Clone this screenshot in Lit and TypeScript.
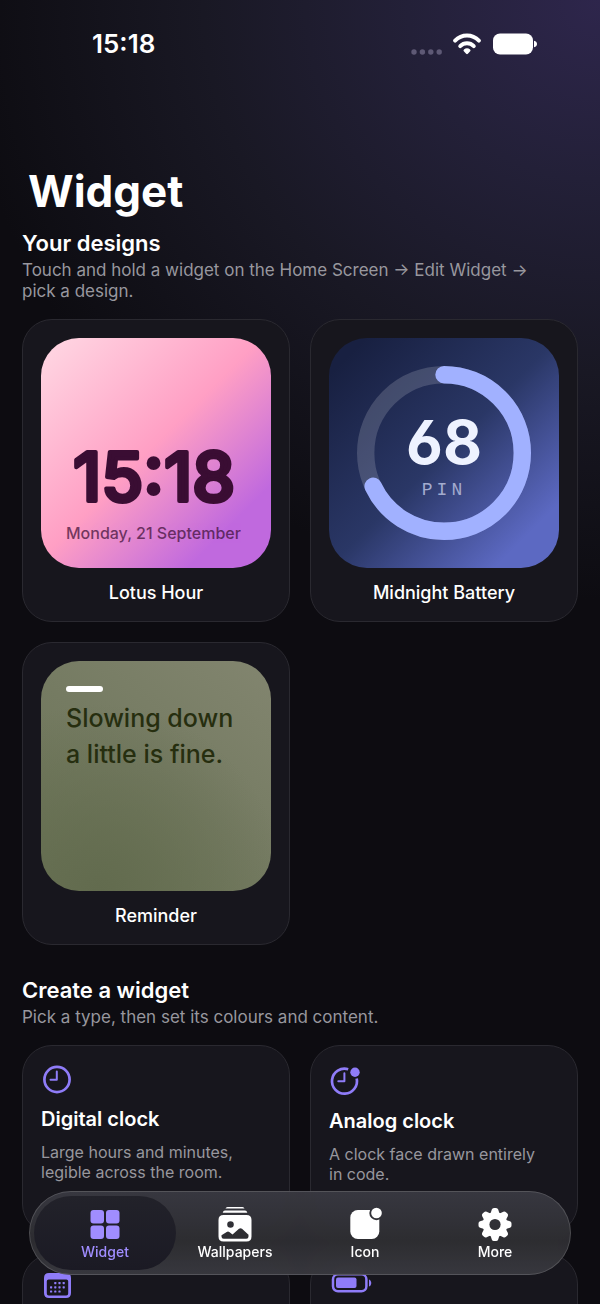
import { LitElement, html, svg, css } from "lit";
import { customElement, property, state } from "lit/decorators.js";

const palette = css`
  :host {
    --ink: #ffffff;
    --muted: #98979e;
    --accent: #8f7cf8;
    --card: #17161d;
    --line: #2a2930;
    font-family: Inter, "Liberation Sans", sans-serif;
    color: var(--ink);
  }
  * {
    box-sizing: border-box;
  }
  button {
    font: inherit;
    color: inherit;
    cursor: pointer;
  }
  svg {
    display: block;
  }
`;

@customElement("status-bar")
export class StatusBar extends LitElement {
  static styles = [
    palette,
    css`
      :host {
        display: flex;
        align-items: center;
        justify-content: space-between;
        height: 88px;
        padding: 0 63px 0 92px;
      }
      .time {
        font-size: 26px;
        line-height: 28px;
        font-weight: 600;
      }
      .signals {
        display: flex;
        align-items: center;
        gap: 11px;
      }
      .dots {
        margin-top: 16px;
      }
    `,
  ];

  render() {
    return html`
      <time class="time">15:18</time>
      <div class="signals">
        <svg class="dots" width="31" height="6" viewBox="0 0 31 6" fill="#5e5975" aria-label="No signal">
          <circle cx="3" cy="3" r="2.7" />
          <circle cx="11.4" cy="3" r="2.7" />
          <circle cx="19.8" cy="3" r="2.7" />
          <circle cx="28.2" cy="3" r="2.7" />
        </svg>
        <svg width="28" height="22" viewBox="0 0 28 22" fill="none" stroke="#fff" stroke-width="3.9" stroke-linecap="round" aria-label="Wi-Fi">
          <path d="M2.1 7.6C8.7.8 19.3.8 25.9 7.6" />
          <path d="M7.2 13.1C11 9.3 17 9.3 20.8 13.1" />
          <path d="M14 19.9 11.7 17.5Q14 15.6 16.3 17.5Z" fill="#fff" stroke-width="2.4" stroke-linejoin="round" />
        </svg>
        <svg width="45" height="22" viewBox="0 0 45 22" fill="#fff" aria-label="Battery full">
          <rect x="1" y="0.5" width="40" height="21" rx="7" />
          <path d="M42 7.8C44.2 8.4 45 9.600 45 11S44.200 13.600 42 14.200Z" />
        </svg>
      </div>
    `;
  }
}

@customElement("design-card")
export class DesignCard extends LitElement {
  @property() kind = "clock";
  @property() label = "";

  static styles = [
    palette,
    css`
      .card {
        display: flex;
        flex-direction: column;
        gap: 14px;
        width: 100%;
        padding: 18px 18px 17px;
        border: 1px solid var(--line);
        border-radius: 30px;
        background: var(--card);
      }
      .preview {
        display: flex;
        flex-direction: column;
        width: 100%;
        aspect-ratio: 1;
        border-radius: 38px;
        overflow: hidden;
        text-align: left;
      }
      .clock {
        justify-content: flex-end;
        gap: 20px;
        padding: 25px;
        background: linear-gradient(135deg, #ffd9e4 0%, #ff9fc4 48%, #c069de 82%, #c069de 100%);
        color: #3a0d33;
      }
      .digits {
        width: 100%;
        overflow: visible;
        font-size: 68px;
        font-weight: 500;
        fill: #3a0d33;
        stroke: #3a0d33;
        stroke-width: 4px;
        stroke-linejoin: round;
      }
      .date {
        font-size: 16px;
        line-height: 20px;
        font-weight: 500;
        white-space: nowrap;
        opacity: 0.7;
      }
      .battery {
        background: linear-gradient(135deg, #182041 8%, #2a3766 50%, #5c69c2 86%);
      }
      .value {
        font-size: 60px;
        font-weight: 700;
        font-feature-settings: "cv03";
        fill: #eef2ff;
      }
      .unit {
        font-family: "Liberation Mono", monospace;
        font-size: 18px;
        letter-spacing: 4px;
        fill: #a3abce;
      }
      .note {
        gap: 8px;
        padding: 25px;
        background:
          radial-gradient(circle at 25% 100%, #626b4e 0%, rgba(98, 107, 78, 0) 65%),
          linear-gradient(40deg, #6b7456 0%, #757b62 50%, #82856f 100%);
      }
      .dash {
        width: 37px;
        height: 6px;
        border-radius: 3px;
        background: #fff;
      }
      .quote {
        font-size: 25px;
        line-height: 36px;
        font-weight: 500;
        color: #262e0f;
      }
      .name {
        font-size: 18px;
        line-height: 22px;
        font-weight: 500;
        text-align: center;
      }
    `,
  ];

  private preview() {
    if (this.kind === "clock") {
      return html`<span class="preview clock">
        <svg class="digits" viewBox="0 0 180 50">
          <text x="88" y="48" text-anchor="middle">15:18</text>
        </svg>
        <span class="date">Monday, 21 September</span>
      </span>`;
    }
    if (this.kind === "battery") {
      return html`<span class="preview battery">
        <svg viewBox="0 0 230 230">
          <g fill="none" stroke-width="17.4" transform="rotate(-90 115 115)">
            <circle cx="115" cy="115" r="78.300" stroke="#fff" stroke-opacity="0.16" />
            <circle cx="115" cy="115" r="78.300" stroke="#a1b1ff" stroke-linecap="round" pathLength="100" stroke-dasharray="68 100" />
          </g>
          <text class="value" x="115" y="126" text-anchor="middle">68</text>
          <text class="unit" x="115" y="157" text-anchor="middle">PIN</text>
        </svg>
      </span>`;
    }
    return html`<span class="preview note">
      <span class="dash"></span>
      <span class="quote">Slowing down<br />a little is fine.</span>
    </span>`;
  }

  render() {
    return html`<button class="card" type="button">
      ${this.preview()}
      <span class="name">${this.label}</span>
    </button>`;
  }
}

const typeIcons: Record<string, unknown> = {
  digital: html`<svg width="32" height="30" viewBox="0 0 32 30" fill="none" stroke="currentColor">
    <circle cx="16" cy="15.500" r="12.600" stroke-width="2.700" />
    <path d="M15.800 7.600V15.700H9.500" stroke-width="2" stroke-linecap="round" stroke-linejoin="round" />
  </svg>`,
  analog: html`<svg width="32" height="32" viewBox="0 0 32 32" fill="none" stroke="currentColor">
    <path d="M19.200 5.200A12.500 12.500 0 1 0 27.700 14.500" stroke-width="2.700" />
    <path d="M15.400 9.300V17.300H9.300" stroke-width="2" stroke-linecap="round" stroke-linejoin="round" />
    <circle cx="26" cy="8.300" r="4.700" fill="currentColor" stroke="none" />
  </svg>`,
  calendar: html`<svg width="32" height="26" viewBox="0 0 32 26" fill="currentColor">
    <path fill-rule="evenodd" d="M8 0H25Q30 0 30 5V20Q30 25 25 25H8Q3 25 3 20V5Q3 0 8 0ZM7.600 6.500Q5.800 6.500 5.800 8.300V20.500Q5.800 22.500 7.800 22.500H25.200Q27.200 22.500 27.200 20.500V8.300Q27.200 6.500 25.400 6.500Z" />
    ${[0, 1, 2].map((row) =>
      [0, 1, 2, 3].map((col) =>
        (row === 0 && col === 0) || (row === 2 && col === 3)
          ? null
          : svg`<rect x=${9 + col * 4.2} y=${9 + row * 4.2} width="2.200" height="2.200" rx="0.600" />`
      )
    )}
  </svg>`,
  battery: html`<svg width="44" height="20" viewBox="0 0 44 20">
    <rect x="4" y="1.300" width="33.400" height="17" rx="5" fill="none" stroke="currentColor" stroke-width="2.500" />
    <rect x="7" y="4.500" width="20.500" height="10.500" rx="2" fill="currentColor" />
    <path d="M40 6.500C43 7.500 43 12.500 40 13.500Z" fill="currentColor" />
  </svg>`,
};

@customElement("type-card")
export class TypeCard extends LitElement {
  @property() icon = "digital";
  @property() label = "";
  @property() text = "";

  static styles = [
    palette,
    css`
      :host {
        display: grid;
      }
      .card {
        display: flex;
        flex-direction: column;
        align-items: flex-start;
        width: 100%;
        min-height: 189px;
        padding: 18px;
        border: 1px solid var(--line);
        border-radius: 30px;
        background: var(--card);
        text-align: left;
      }
      .icon {
        color: var(--accent);
      }
      .name {
        margin-top: 13px;
        font-size: 20px;
        line-height: 24px;
        font-weight: 600;
      }
      .text {
        margin-top: 11px;
        padding-right: 8px;
        font-size: 16px;
        line-height: 20px;
        color: var(--muted);
      }
    `,
  ];

  render() {
    return html`<button class="card" type="button">
      <span class="icon">${typeIcons[this.icon]}</span>
      <span class="name">${this.label}</span>
      <span class="text">${this.text}</span>
    </button>`;
  }
}

const tabIcons: Record<string, unknown> = {
  Widget: html`<svg width="36" height="36" viewBox="0 0 36 36" fill="currentColor">
    <rect x="3.500" y="4" width="13.500" height="13.500" rx="3" />
    <rect x="19" y="4" width="13.500" height="13.500" rx="3" />
    <rect x="3.500" y="19.500" width="13.500" height="13.500" rx="3" />
    <rect x="19" y="19.500" width="13.500" height="13.500" rx="3" />
  </svg>`,
  Wallpapers: html`<svg width="36" height="36" viewBox="0 0 36 36" fill="currentColor">
    <path d="M10.500 1H25.500Q27 1 27.500 2.600H8.500Q9 1 10.500 1Z" />
    <path d="M8 4.600H28Q29.800 4.600 30.300 6.800H5.700Q6.200 4.600 8 4.600Z" />
    <path fill-rule="evenodd" d="M6.500 9H29.500Q34.500 9 34.500 14V30.500Q34.500 35.500 29.500 35.500H6.500Q1.500 35.500 1.500 30.500V14Q1.500 9 6.500 9ZM4.500 29.200V30.500Q4.500 32.700 6.700 32.700H29.300Q31.500 32.700 31.500 30.500V28.800L25 22.800Q23.500 21.500 22 22.800L15.500 28.600L12.300 25.900Q11 24.900 9.700 25.900ZM13.500 15.200A3.300 3.300 0 1 0 13.500 21.800A3.300 3.300 0 1 0 13.500 15.200Z" />
  </svg>`,
  Icon: html`<svg width="36" height="36" viewBox="0 0 36 36" fill="currentColor">
    <mask id="notch">
      <rect width="36" height="36" fill="#fff" />
      <circle cx="29.500" cy="7" r="7.200" fill="#000" />
    </mask>
    <rect x="3.300" y="4" width="29" height="29" rx="7.500" mask="url(#notch)" />
    <circle cx="29.500" cy="7" r="5.300" />
  </svg>`,
  More: html`<svg width="36" height="36" viewBox="0 0 36 36" fill="currentColor">
    <mask id="hub">
      <rect width="36" height="36" fill="#fff" />
      <circle cx="18" cy="18.500" r="5.600" fill="#000" />
    </mask>
    <g mask="url(#hub)">
      <circle cx="18" cy="18.500" r="12.400" />
      ${[0, 45, 90, 135, 180, 225, 270, 315].map(
        (angle) =>
          svg`<path transform="rotate(${angle} 18 18.500)" d="M13.200 8.500L14.800 3.600Q15.300 2 17 2H19Q20.700 2 21.200 3.600L22.800 8.500Z" />`
      )}
    </g>
  </svg>`,
};

@customElement("tab-bar")
export class TabBar extends LitElement {
  @state() private current = "Widget";

  static styles = [
    palette,
    css`
      .bar {
        display: flex;
        height: 84px;
        padding: 4px 10px;
        border: 1px solid rgba(255, 255, 255, 0.15);
        border-radius: 42px;
        background: linear-gradient(rgba(58, 58, 66, 0.93), rgba(47, 47, 51, 0.93) 60%, rgba(58, 58, 64, 0.93));
        backdrop-filter: blur(8px);
      }
      .tab {
        position: relative;
        display: flex;
        flex: 1;
        flex-direction: column;
        align-items: center;
        justify-content: center;
        gap: 2px;
        padding-bottom: 1px;
        color: #fff;
        text-decoration: none;
        font-size: 14px;
        line-height: 16px;
        font-weight: 500;
      }
      .tab.current {
        color: #a08dff;
      }
      .tab.current::before {
        content: "";
        position: absolute;
        inset: 0 -6px;
        border-radius: 37px;
        background: linear-gradient(#22222a, #1b1a24);
      }
      .icon,
      .label {
        position: relative;
      }
    `,
  ];

  render() {
    return html`<nav class="bar" aria-label="Sections">
      ${Object.keys(tabIcons).map(
        (name) => html`<a
          class="tab ${name === this.current ? "current" : ""}"
          href="#${name.toLowerCase()}"
          @click=${() => (this.current = name)}
        >
          <span class="icon">${tabIcons[name]}</span>
          <span class="label">${name}</span>
        </a>`
      )}
    </nav>`;
  }
}

@customElement("app-root")
export class AppRoot extends LitElement {
  static styles = [
    palette,
    css`
      :host {
        display: block;
        position: relative;
        height: 100vh;
        overflow: hidden;
        background:
          radial-gradient(ellipse 640px 600px at 100% 0, #2e264c 0%, #232038 30%, #191824 62%, rgba(14, 13, 18, 0) 100%),
          #0d0c11;
      }
      .scroll {
        height: 100%;
        overflow-y: auto;
        scrollbar-width: none;
      }
      .content {
        padding: 77px 22px 120px;
      }
      .title {
        margin: 0 0 12px;
        padding-left: 6px;
        font-size: 44px;
        line-height: 52px;
        font-weight: 700;
      }
      .section + .section {
        margin-top: 31px;
      }
      .heading {
        margin: 0;
        font-size: 22px;
        line-height: 28px;
        font-weight: 600;
      }
      .hint {
        margin: 3px 0 17px;
        padding-right: 20px;
        font-size: 17px;
        line-height: 21px;
        color: var(--muted);
      }
      .grid {
        display: grid;
        grid-template-columns: 1fr 1fr;
        gap: 20px;
      }
      .tabs {
        position: absolute;
        left: 29px;
        right: 29px;
        bottom: 29px;
      }
    `,
  ];

  render() {
    return html`
      <div class="scroll">
        <status-bar></status-bar>
        <main class="content">
          <h1 class="title">Widget</h1>
          <section class="section">
            <h2 class="heading">Your designs</h2>
            <p class="hint">Touch and hold a widget on the Home Screen → Edit Widget → pick a design.</p>
            <div class="grid">
              <design-card kind="clock" label="Lotus Hour"></design-card>
              <design-card kind="battery" label="Midnight Battery"></design-card>
              <design-card kind="note" label="Reminder"></design-card>
            </div>
          </section>
          <section class="section">
            <h2 class="heading">Create a widget</h2>
            <p class="hint">Pick a type, then set its colours and content.</p>
            <div class="grid">
              <type-card icon="digital" label="Digital clock" text="Large hours and minutes, legible across the room."></type-card>
              <type-card icon="analog" label="Analog clock" text="A clock face drawn entirely in code."></type-card>
              <type-card icon="calendar"></type-card>
              <type-card icon="battery"></type-card>
            </div>
          </section>
        </main>
      </div>
      <tab-bar class="tabs"></tab-bar>
    `;
  }
}
